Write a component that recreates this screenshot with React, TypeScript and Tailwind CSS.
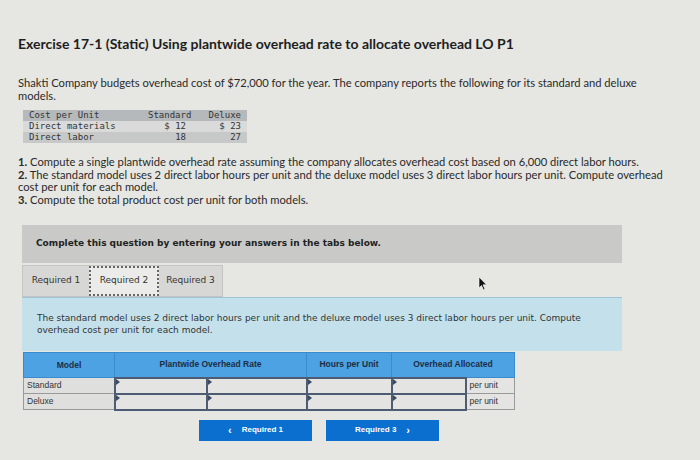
import React from 'react';

const LATO = { fontFamily: 'Lato, "Open Sans", sans-serif' };
const VERDANA = { fontFamily: '"DejaVu Sans", Verdana, sans-serif' };
const ARIAL = { fontFamily: '"Liberation Sans", Arial, sans-serif' };
const MONO = { fontFamily: '"DejaVu Sans Mono", monospace' };

const COST_ROWS = [
  { label: 'Cost per Unit', std: 'Standard', dlx: 'Deluxe', bg: 'bg-[#b6b9bc]' },
  { label: 'Direct materials', std: '$ 12', dlx: '$ 23', bg: 'bg-[#d9dad9]' },
  { label: 'Direct labor', std: '18', dlx: '27', bg: 'bg-[#c7c9c8]' },
];

function InputCell({ w }: { w: string }) {
  return (
    <td className={`relative border-2 border-[#4d5c72] bg-[#e4e4e2] p-0 ${w}`}>
      <span className="absolute left-0 top-0 h-0 w-0 border-l-[4px] border-t-[3px] border-b-[3px] border-l-[#3b4a60] border-t-transparent border-b-transparent" />
    </td>
  );
}

function Cursor() {
  return (
    <svg className="absolute left-[478px] top-[276px]" width="10" height="15" viewBox="0 0 10 15">
      <path d="M1 1 L1 12 L3.5 9.5 L5.5 14 L7 13.3 L5 8.8 L8.5 8.8 Z" fill="#111" stroke="#fff" strokeWidth="0.6" />
    </svg>
  );
}

export default function App() {
  return (
    <div className="relative h-[460px] w-[700px] overflow-hidden bg-[#e6e6e2] text-[#222]">
      <div className="px-[18px] pt-[34px]">
        <h1 className="text-[14px] font-bold leading-[20px] text-[#1e1e1e]" style={LATO}>
          Exercise 17-1 (Static) Using plantwide overhead rate to allocate overhead LO P1
        </h1>
        <p className="mt-[22px] w-[640px] text-[11.2px] leading-[13px] text-[#2a2a2a]" style={LATO}>
          Shakti Company budgets overhead cost of $72,000 for the year. The company reports the following for its standard and deluxe models.
        </p>

        <div className="ml-[5px] mt-[8px] w-[224px] text-[9px] leading-[11px] text-[#333]" style={MONO}>
          {COST_ROWS.map((r) => (
            <div key={r.label} className={`grid grid-cols-[125px_48px_51px] ${r.bg}`}>
              <span className="pl-[6px]">{r.label}</span>
              <span className="pr-[10px] text-right">{r.std}</span>
              <span className="pr-[6px] text-right">{r.dlx}</span>
            </div>
          ))}
        </div>

        <div className="mt-[13px] w-[660px] text-[11.2px] leading-[12.5px] text-[#2a2a2a]" style={LATO}>
          <p><b>1.</b> Compute a single plantwide overhead rate assuming the company allocates overhead cost based on 6,000 direct labor hours.</p>
          <p><b>2.</b> The standard model uses 2 direct labor hours per unit and the deluxe model uses 3 direct labor hours per unit. Compute overhead cost per unit for each model.</p>
          <p><b>3.</b> Compute the total product cost per unit for both models.</p>
        </div>

        <div className="ml-[4px] mt-[19px] flex h-[38px] w-[600px] items-center bg-[#c9cac8] pl-[14px]">
          <span className="text-[9px] font-bold text-[#222]" style={VERDANA}>
            Complete this question by entering your answers in the tabs below.
          </span>
        </div>

        <div className="ml-[4px] mt-[2px] flex h-[32px] w-[201px] border border-[#c4c4c2] bg-[#d7d7d5] text-[9px] text-[#333]" style={VERDANA}>
          <div className="flex w-[66px] items-center justify-center">Required 1</div>
          <div className="flex w-[70px] items-center justify-center border-2 border-dotted border-[#666] bg-[#ebebe9]">Required 2</div>
          <div className="flex flex-1 items-center justify-center">Required 3</div>
        </div>

        <div className="ml-[4px] h-[54px] w-[600px] border-t border-[#9cc4d4] bg-[#c4e1eb] pl-[15px] pt-[14px] text-[9px] leading-[12px] text-[#333]" style={VERDANA}>
          The standard model uses 2 direct labor hours per unit and the deluxe model uses 3 direct labor hours per unit. Compute
          <br />
          overhead cost per unit for each model.
        </div>

        <table className="ml-[5px] mt-[1px] border-collapse text-[8.5px] text-[#333]" style={ARIAL}>
          <thead>
            <tr className="h-[25px] bg-[#4ca2e2] font-bold text-[#1d2f45]">
              <th className="w-[91px] border border-[#3b8bcc]">Model</th>
              <th colSpan={2} className="w-[192px] border border-[#3b8bcc]">Plantwide Overhead Rate</th>
              <th className="w-[85px] border border-[#3b8bcc]">Hours per Unit</th>
              <th colSpan={2} className="w-[123px] border border-[#3b8bcc]">Overhead Allocated</th>
            </tr>
          </thead>
          <tbody>
            {['Standard', 'Deluxe'].map((m) => (
              <tr key={m} className="h-[16px]">
                <td className="border border-[#9a9a9a] bg-[#dfdfdd] pl-[3px]">{m}</td>
                <InputCell w="w-[92px]" />
                <InputCell w="w-[100px]" />
                <InputCell w="w-[85px]" />
                <InputCell w="w-[74px]" />
                <td className="w-[49px] border border-[#9a9a9a] bg-[#e4e4e2] pl-[3px]">per unit</td>
              </tr>
            ))}
          </tbody>
        </table>

        <div className="ml-[4px] mt-[9px] flex w-[600px] justify-center gap-[14px] pr-[6px]">
          <div className="flex h-[21px] w-[113px] items-center justify-center gap-[10px] bg-[#0b6fd0] text-[8px] font-bold text-white" style={ARIAL}>
            <span className="text-[11px] leading-none">‹</span>
            <span>Required 1</span>
          </div>
          <div className="flex h-[21px] w-[113px] items-center justify-center gap-[10px] bg-[#0b6fd0] text-[8px] font-bold text-white" style={ARIAL}>
            <span>Required 3</span>
            <span className="text-[11px] leading-none">›</span>
          </div>
        </div>
      </div>
      <Cursor />
    </div>
  );
}
